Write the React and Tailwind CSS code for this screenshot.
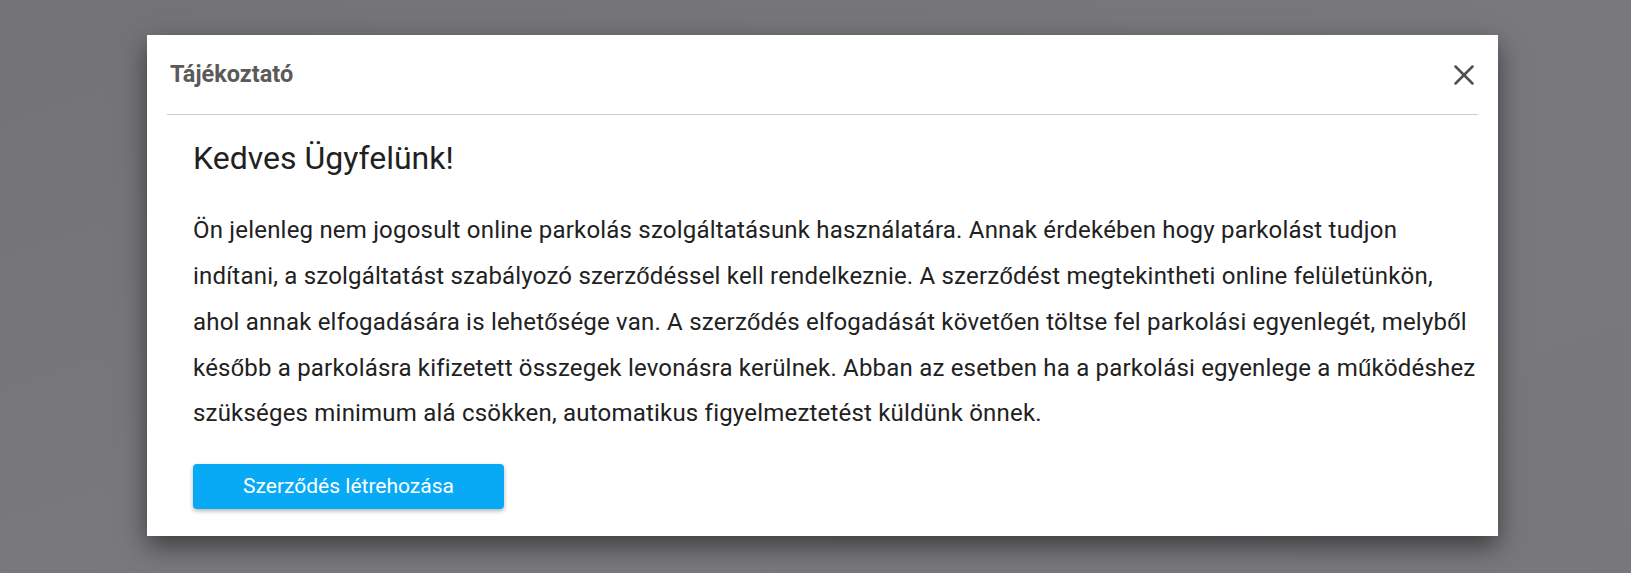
import { X } from 'lucide-react';

const O = ({ children }) => (
  <span className="font-['Liberation_Sans',sans-serif] font-light">{children}</span>
);

export default function App() {
  return (
    <div className="min-h-screen w-full bg-gradient-to-br from-[#737277] via-[#79787d] to-[#78777c] pl-[147px] pt-[35px] pb-[38px] font-['Roboto',sans-serif]">
      <div className="w-[1351px] bg-white shadow-[0_10px_24px_rgba(0,0,0,0.5)]">
        {/* header */}
        <div className="mx-5 flex h-[80px] items-center justify-between border-b border-[#cfcfcf]">
          <h2 className="pl-[3px] text-[23.5px] font-bold text-[#5a5a5a]">Tájékoztató</h2>
          <button className="-mr-[3px] text-[#4f4f4f]">
            <X className="h-[34px] w-[34px]" strokeWidth={1.8} />
          </button>
        </div>

        {/* body */}
        <div className="pl-[46px] pr-[30px] pt-[24px] pb-[27px] text-[#212121]">
          <h1 className="text-[32px] leading-[38px]">Kedves Ügyfelünk!</h1>
          <p className="mt-[31px] whitespace-nowrap text-[24px] leading-[45px] tracking-[0.2px]">
            Ön jelenleg nem jogosult online parkolás szolgáltatásunk használatára. Annak érdekében hogy parkolást tudjon
            <br />
            indítani, a szolgáltatást szabályozó szerz<O>ő</O>déssel kell rendelkeznie. A szerz<O>ő</O>dést megtekintheti
            online felületünkön,
            <br />
            ahol annak elfogadására is lehet<O>ő</O>sége van. A szerz<O>ő</O>dés elfogadását követ<O>ő</O>en töltse fel
            parkolási egyenlegét, melyb<O>ő</O>l
            <br />
            kés<O>ő</O>bb a parkolásra kifizetett összegek levonásra kerülnek. Abban az esetben ha a parkolási egyenlege a
            m<O>ű</O>ködéshez
            <br />
            szükséges minimum alá csökken, automatikus figyelmeztetést küldünk önnek.
          </p>
          <button className="mt-[28px] h-[45px] w-[311px] rounded-[4px] bg-[#08aaf5] text-[21px] text-white shadow-[0_2px_4px_rgba(0,0,0,0.3)]">
            Szerződés létrehozása
          </button>
        </div>
      </div>
    </div>
  );
}
